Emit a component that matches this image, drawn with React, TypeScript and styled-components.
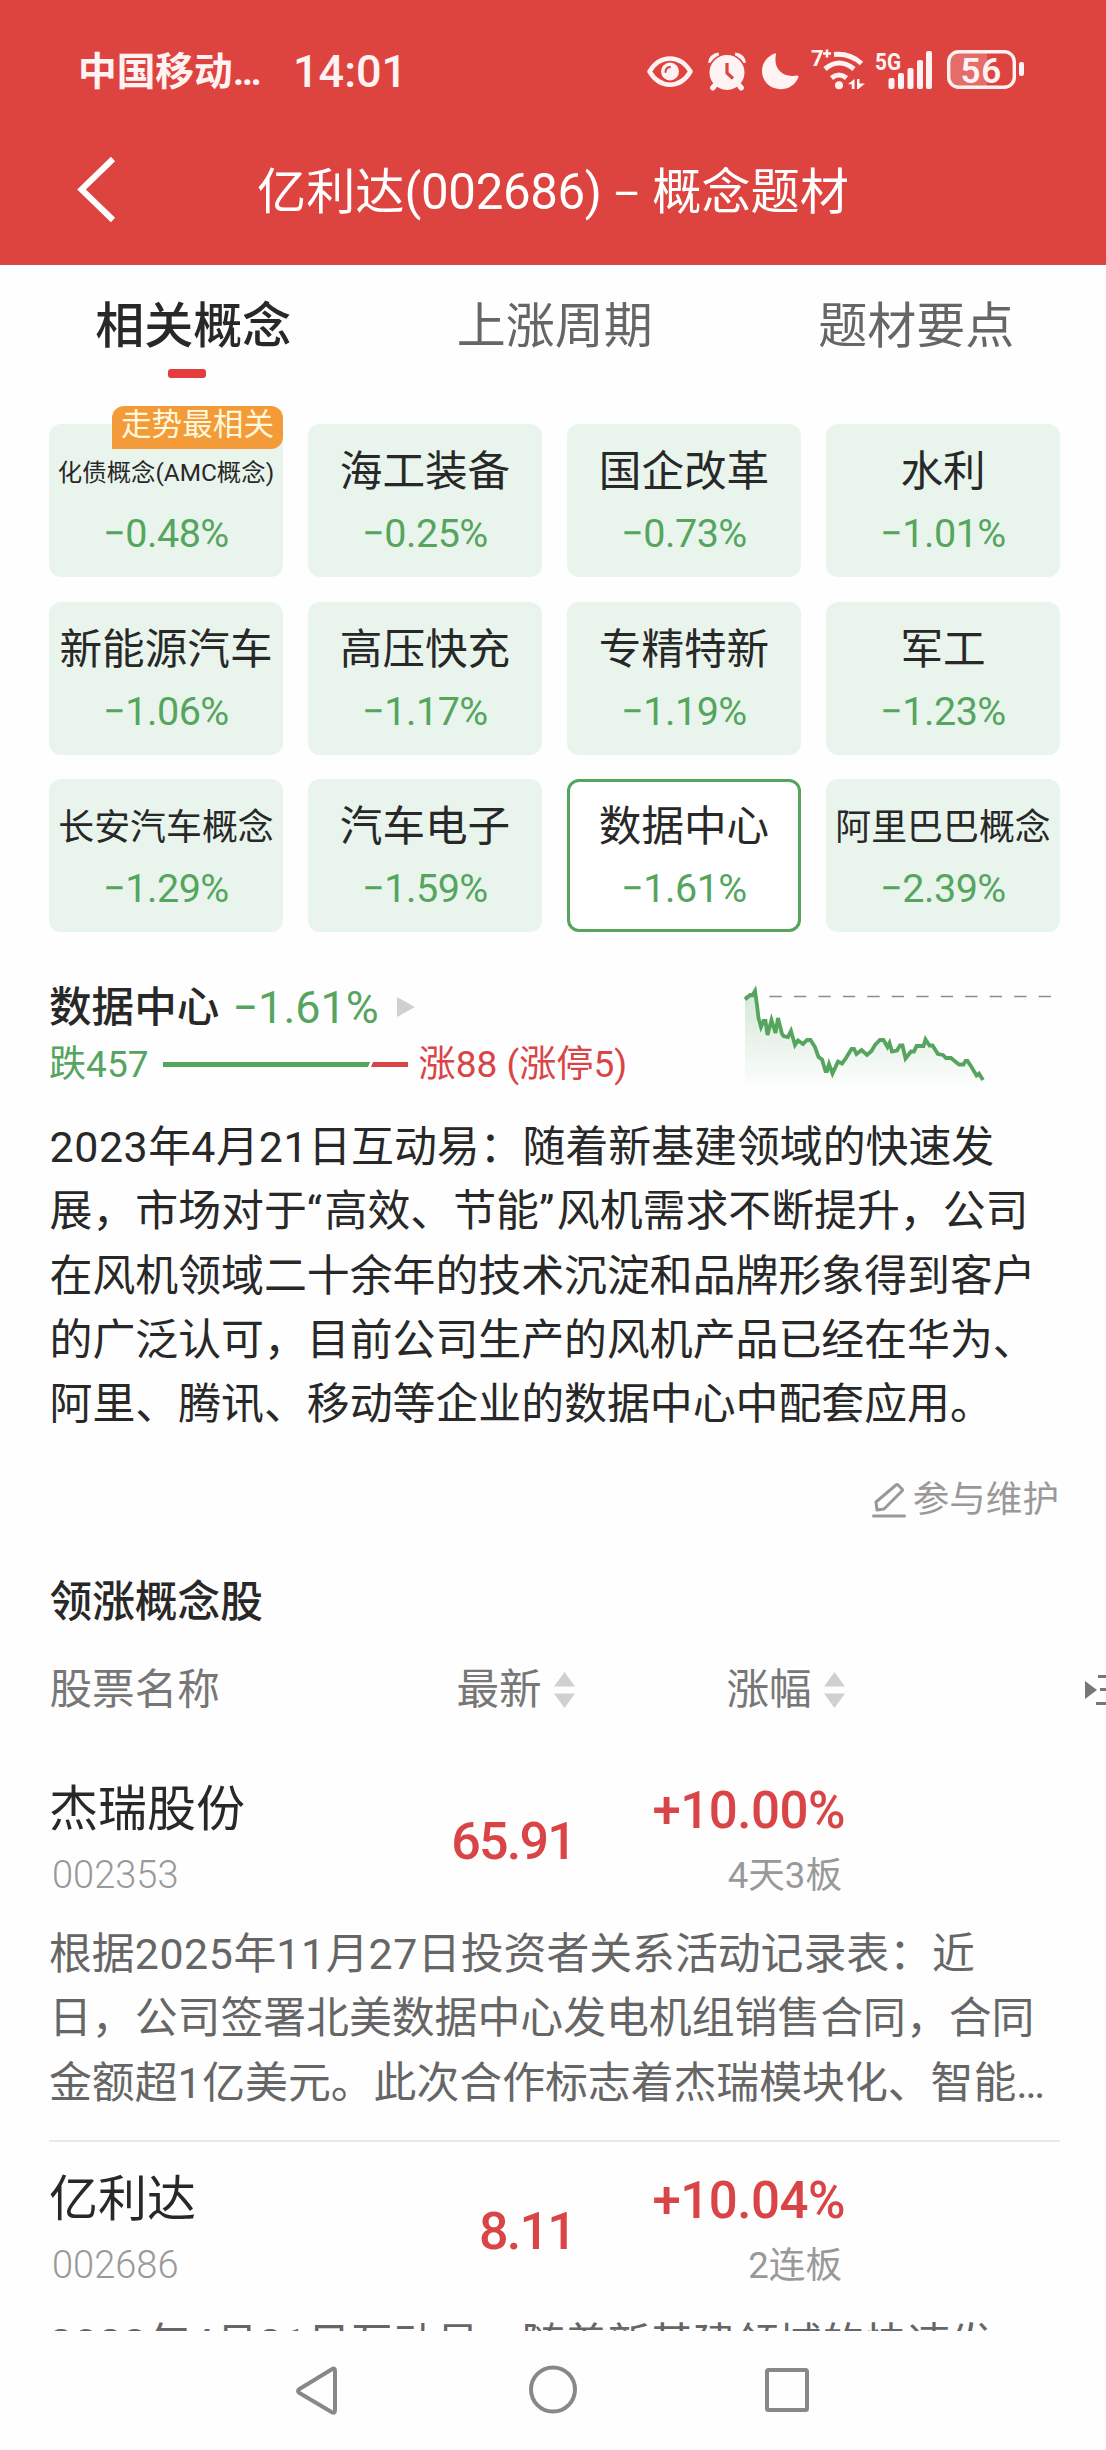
import React from "react";
import styled, { createGlobalStyle } from "styled-components";

const FONT = `Roboto, "Noto Sans CJK SC", sans-serif`;
const GREEN = "#55a55f";
const RED = "#d94546";
const INK = "#282828";

const GlobalStyle = createGlobalStyle`
  *, *::before, *::after { box-sizing: border-box; }
  html, body { margin: 0; padding: 0; background: #fff; }
  svg { display: block; }
`;

const Screen = styled.div`
  display: flex;
  flex-direction: column;
  width: 1106px;
  height: 2450px;
  overflow: hidden;
  background: #fefefe;
  color: ${INK};
  font-family: ${FONT};
  white-space: nowrap;
`;

const Header = styled.header`
  flex: none;
  height: 265px;
  background: #dd4440;
  color: #fff;
  border-bottom: 1px solid #cf4c48;
`;

const StatusBar = styled.div`
  display: flex;
  align-items: center;
  height: 142px;
  padding: 0 80px 0 78px;
  color: #fff2f2;
`;

const Carrier = styled.span`
  width: 215px;
  padding-top: 2px;
  font-size: 38.7px;
  font-weight: 700;
  line-height: 60px;
`;

const Clock = styled.span`
  flex: 1;
  padding-top: 1px;
  font-size: 45px;
  font-weight: 500;
  line-height: 60px;
`;

const TitleBar = styled.div`
  display: flex;
  align-items: center;
  height: 98px;
  padding-left: 76px;
`;

const BackButton = styled.button`
  flex: none;
  width: 181px;
  padding: 0;
  border: 0;
  background: none;
  color: inherit;
`;

const PageTitle = styled.h1`
  margin: 0;
  padding-top: 4px;
  font-size: 49.2px;
  font-weight: 400;
  line-height: 70px;
  word-spacing: -1px;
`;

const TitleCode = styled.span`
  letter-spacing: -0.35px;
`;

const TitleDash = styled.span`
  font-size: 43px;
`;

const Tabs = styled.nav`
  flex: none;
  display: grid;
  grid-template-columns: repeat(3, 361.5px);
  padding: 27px 0 0 12.5px;
  height: 159px;
`;

const Tab = styled.div<{ $active?: boolean }>`
  display: flex;
  flex-direction: column;
  align-items: center;
  font-size: 49px;
  line-height: 70px;
  font-weight: ${(p) => (p.$active ? 500 : 400)};
  color: ${(p) => (p.$active ? INK : "#666")};
`;

const Indicator = styled.i`
  width: 38px;
  height: 9px;
  margin: 7px 12px 0 0;
  border-radius: 3px;
  background: #e33d40;
`;

const ConceptGrid = styled.section`
  flex: none;
  display: grid;
  grid-template-columns: repeat(4, 234px);
  grid-auto-rows: 153px;
  gap: 24.6px 25px;
  padding: 0 49px;
`;

const Concept = styled.div<{ $selected?: boolean }>`
  position: relative;
  display: flex;
  flex-direction: column;
  align-items: center;
  border-radius: 12px;
  border: 3px solid ${(p) => (p.$selected ? GREEN : "#e9f5ec")};
  background: ${(p) => (p.$selected ? "#fff" : "#e9f5ec")};
`;

const ConceptName = styled.div<{ $size: number; $drop: number }>`
  height: 60px;
  margin-top: 14px;
  padding-top: ${(p) => p.$drop}px;
  font-size: ${(p) => p.$size}px;
  line-height: 60px;
`;

const ConceptChange = styled.div`
  margin-top: 3px;
  color: ${GREEN};
  font-size: 39.5px;
  line-height: 60px;
  letter-spacing: -0.5px;
`;

const Badge = styled.span`
  position: absolute;
  right: -3px;
  top: -21px;
  width: 171px;
  height: 43px;
  border-radius: 12px 12px 12px 0;
  background: #f29b38;
  color: #fff8dc;
  font-size: 30.6px;
  line-height: 38px;
  text-align: center;
`;

const Summary = styled.section`
  flex: none;
  display: flex;
  justify-content: space-between;
  height: 183px;
  padding: 44px 49px 0;
`;

const SummaryText = styled.div`
  padding-top: 2px;
`;

const SummaryLine = styled.div`
  display: flex;
  align-items: center;
  height: 57px;
`;

const ConceptTitle = styled.h2`
  margin: 0 13px 0 0;
  font-size: 42.6px;
  font-weight: 500;
  line-height: 56px;
`;

const SummaryChange = styled.span`
  margin-right: 18px;
  padding-top: 3px;
  color: ${GREEN};
  font-size: 45px;
  line-height: 56px;
`;

const Count = styled.span<{ $up?: boolean }>`
  padding-top: 2px;
  color: ${(p) => (p.$up ? RED : GREEN)};
  font-size: 37.1px;
  line-height: 56px;
`;

const Ratio = styled.div`
  width: 245px;
  margin: 2px 11px 0 14px;
`;

const ChartBox = styled.div`
  width: 315px;
`;

const Body = styled.div`
  flex: none;
  padding-left: 49.5px;
  font-size: 42.88px;
  line-height: 64.3px;
`;

const Digits = styled.span`
  letter-spacing: 0.6px;
`;

const Quotation = styled.span`
  letter-spacing: 2.6px;
`;

const Maintain = styled.div`
  flex: none;
  display: flex;
  align-items: center;
  justify-content: flex-end;
  gap: 7px;
  height: 60px;
  margin-top: 33px;
  padding-right: 47px;
  color: #999;
  font-size: 36.6px;
  line-height: 60px;
`;

const SectionTitle = styled.h2`
  flex: none;
  margin: 42px 0 0;
  padding-left: 49.5px;
  font-size: 42.7px;
  font-weight: 500;
  line-height: 60px;
`;

const TableHead = styled.div`
  flex: none;
  display: grid;
  grid-template-columns: 407px 270px 358px 22px;
  align-items: center;
  height: 60px;
  margin-top: 28.5px;
  padding-left: 49.5px;
  color: #777;
  font-size: 42.6px;
  line-height: 56px;
`;

const HeadCell = styled.div`
  display: flex;
  align-items: center;
  gap: 12px;
`;

const HeadLabel = styled.span`
  padding-bottom: 2px;
`;

const Stock = styled.article`
  flex: none;
  height: 390px;
  margin: 0 46px 0 49px;
  padding-top: 25px;
  border-bottom: 2px solid #e9e9e9;
`;

const Quote = styled.div`
  display: grid;
  grid-template-columns: 250px 276px 270px;
  height: 133px;
`;

const StockName = styled.div`
  font-size: 49px;
  line-height: 66px;
`;

const StockCode = styled.div`
  padding-left: 3px;
  color: #999;
  font-size: 38px;
  font-weight: 300;
  line-height: 65px;
`;

const Price = styled.div`
  color: ${RED};
  font-size: 52px;
  font-weight: 500;
  line-height: 129px;
  letter-spacing: -1.8px;
  text-align: right;
`;

const Gain = styled.div`
  color: ${RED};
  font-size: 51px;
  font-weight: 500;
  line-height: 67px;
  letter-spacing: -0.5px;
  text-align: right;
`;

const Streak = styled.div`
  padding-right: 3px;
  color: #999;
  font-size: 36.6px;
  line-height: 64px;
  text-align: right;
`;

const Reason = styled.div`
  padding-top: 12px;
  color: #666;
  font-size: 42.85px;
  line-height: 64.3px;
`;

const StockList = styled.main`
  flex: none;
  height: 579px;
  margin-top: 31.8px;
  overflow: hidden;
`;

const NavBar = styled.footer`
  flex: none;
  display: flex;
  justify-content: space-between;
  align-items: center;
  height: 119px;
  padding: 0 295px;
`;

const concepts = [
  { name: "化债概念(AMC概念)", change: "−0.48%", size: 24.4, drop: 2, badge: "走势最相关" },
  { name: "海工装备", change: "−0.25%" },
  { name: "国企改革", change: "−0.73%" },
  { name: "水利", change: "−1.01%" },
  { name: "新能源汽车", change: "−1.06%" },
  { name: "高压快充", change: "−1.17%" },
  { name: "专精特新", change: "−1.19%" },
  { name: "军工", change: "−1.23%" },
  { name: "长安汽车概念", change: "−1.29%", size: 35.9, drop: 2 },
  { name: "汽车电子", change: "−1.59%" },
  { name: "数据中心", change: "−1.61%", selected: true },
  { name: "阿里巴巴概念", change: "−2.39%", size: 35.9, drop: 2 },
];

const stocks = [
  {
    name: "杰瑞股份", code: "002353", price: "65.91", gain: "+10.00%", streak: "4天3板",
    reason: [
      "根据2025年11月27日投资者关系活动记录表：近",
      "日，公司签署北美数据中心发电机组销售合同，合同",
      "金额超1亿美元。此次合作标志着杰瑞模块化、智能…",
    ],
  },
  {
    name: "亿利达", code: "002686", price: "8.11", gain: "+10.04%", streak: "2连板",
    reason: ["2023年4月21日互动易：随着新基建领域的快速发"],
  },
];

const intro = [
  "2023年4月21日互动易：随着新基建领域的快速发",
  "展，市场对于“高效、节能”风机需求不断提升，公司",
  "在风机领域二十余年的技术沉淀和品牌形象得到客户",
  "的广泛认可，目前公司生产的风机产品已经在华为、",
  "阿里、腾讯、移动等企业的数据中心中配套应用。",
];

const TextLine = ({ text }: { text: string }) => (
  <div>
    {text.split(/([0-9]+|[“”])/).map((part, i) => {
      if (/^[0-9]/.test(part)) return <Digits key={i}>{part}</Digits>;
      if (/^[“”]/.test(part)) return <Quotation key={i}>{part}</Quotation>;
      return part;
    })}
  </div>
);

const StatusIcons = () => (
  <svg width="386" height="56" viewBox="640 43 386 56" fill="none" stroke="#fff2f2">
    <path d="M649.500 71.500C660 54 680 54 690.500 71.500C680 89 660 89 649.500 71.500Z" strokeWidth="4.500" strokeLinejoin="round" />
    <circle cx="670" cy="71.500" r="9" fill="#fff2f2" stroke="none" />
    <path d="M665.500 72Q665.500 67.500 670 67" stroke="#dd4440" strokeWidth="2" strokeLinecap="round" />
    <path d="M710.500 63Q711.500 56 719 55M735 55Q742.500 56 743.500 63" strokeWidth="5" />
    <path d="M717 83L712.500 88M737 83L741.500 88" strokeWidth="5" strokeLinecap="round" />
    <circle cx="727" cy="72.500" r="18.300" fill="#fff2f2" stroke="#dd4440" strokeWidth="1.600" />
    <path d="M716 84L713 87.500M738 84L741 87.500" strokeWidth="5" strokeLinecap="round" />
    <path d="M727 63V73L733 78.500" stroke="#dd4440" strokeWidth="3.200" />
    <path d="M774.500 53.500Q776 52.500 776 54.500C773 69 783 78 797 75.500Q799 75.500 798.500 77C795 86 787 89.500 780 89.200C769 88.500 762 80.500 762 71C762 63 767 56.500 774.500 53.500Z" fill="#fff2f2" stroke="none" />
    <g strokeWidth="5">
      <path d="M834 54.500Q850 53 861.500 63.500M825 69Q839 57 854 69M831.500 78Q839 72 846.500 78" />
      <circle cx="839" cy="85.300" r="4" fill="#fff2f2" stroke="none" />
      <path d="M848 84L854.500 79V89H851.800V84.500ZM857 79H859.500V83.500H865L858.500 89H857Z" fill="#fff2f2" stroke="none" />
    </g>
    <path d="M823 53.500H831M827 49.500V57.500" strokeWidth="2.600" />
    <g fill="#fff2f2" stroke="none" fontFamily={FONT} fontWeight="700">
      <text x="811" y="66" fontSize="22">7</text>
      <text x="875" y="69.500" fontSize="24.500" textLength="26" lengthAdjust="spacingAndGlyphs">5G</text>
      <rect x="888.500" y="78" width="6" height="11" rx="2" />
      <rect x="898" y="73" width="6" height="16" rx="2" />
      <rect x="907.500" y="68" width="6" height="21" rx="2" />
      <rect x="917" y="60" width="6" height="29" rx="2" />
      <rect x="926" y="51" width="6" height="38" rx="2" />
    </g>
    <path d="M956 53H987V87H956Q950 87 950 79V61Q950 53 956 53Z" fill="#fff" fillOpacity=".22" stroke="none" />
    <rect x="948.700" y="51.700" width="65.600" height="35.600" rx="10" strokeWidth="3.400" />
    <rect x="1019" y="62" width="5" height="14" rx="2" fill="#fff2f2" stroke="none" />
    <text x="960.500" y="82.500" fontSize="35" letterSpacing="0.800" fontFamily={FONT} fontWeight="600" fill="#fff2f2" stroke="none">56</text>
  </svg>
);

const SortIcon = () => (
  <svg width="21" height="36" viewBox="0 0 21 36" fill="#d0d0d0">
    <path d="M10.500 0L21 14.500H0ZM0 21.500H21L10.500 36Z" />
  </svg>
);

const TREND =
  "M745 999.500L750 995L753 994.500L755 991L757 1005L758.500 1018L761 1027L763.500 1021H765.500L767.500 1035L771.500 1020L775.500 1033L778 1018L782 1034L783.500 1036L788 1037L791 1031L795 1045L798 1040.500L803 1044L807 1040H810.500L815 1047L818.500 1057L822 1059.500L825.500 1071H827L829 1064L832.500 1073.500L838 1061.500L842 1063.500L846 1058L851.500 1049H854L856.500 1054L861.500 1050L867 1055L871.500 1051L875 1045L880 1040H883.500L887.500 1047L889.500 1043L892 1051.500L897 1050.500L900 1045.500H902.500L905.500 1058.500L911 1051.500H914L916.500 1046H923.500L925.500 1039.500L929.500 1045.500H932.500L938 1054L943 1055L946 1058H951L954 1060.500L959 1064.500L963.500 1064.500L965.500 1061H967.500L971.500 1067L976.500 1075.500L979 1073.500L983 1080";

const TrendChart = () => (
  <svg width="315" height="118" viewBox="742 976 315 118" fill="none">
    <defs>
      <linearGradient id="fade" x1="0" y1="990" x2="0" y2="1090" gradientUnits="userSpaceOnUse">
        <stop stopColor={GREEN} stopOpacity=".25" />
        <stop offset="1" stopColor={GREEN} stopOpacity="0" />
      </linearGradient>
    </defs>
    <path d="M745 996.500H1052" stroke="#8c8c8c" strokeWidth="1.400" strokeDasharray="12.300 12.170" />
    <path d={`${TREND}V1090H745Z`} fill="url(#fade)" />
    <path d={TREND} stroke={GREEN} strokeWidth="3.800" strokeLinejoin="miter" />
  </svg>
);

export default function App() {
  return (
    <>
      <GlobalStyle />
      <Screen>
        <Header>
          <StatusBar>
            <Carrier>中国移动…</Carrier>
            <Clock>14:01</Clock>
            <StatusIcons />
          </StatusBar>
          <TitleBar>
            <BackButton aria-label="返回">
              <svg width="44" height="76" viewBox="0 0 44 76" fill="none" stroke="#fff" strokeWidth="6">
                <path d="M37 6L5.500 36.500L37 67" />
              </svg>
            </BackButton>
            <PageTitle>
              亿利达<TitleCode>(002686)</TitleCode> <TitleDash>–</TitleDash> 概念题材
            </PageTitle>
          </TitleBar>
        </Header>
        <Tabs>
          <Tab $active>相关概念<Indicator /></Tab>
          <Tab>上涨周期</Tab>
          <Tab>题材要点</Tab>
        </Tabs>
        <ConceptGrid>
          {concepts.map((c) => (
            <Concept key={c.name} $selected={c.selected}>
              {c.badge && <Badge>{c.badge}</Badge>}
              <ConceptName $size={c.size ?? 42.6} $drop={c.drop ?? 0}>{c.name}</ConceptName>
              <ConceptChange>{c.change}</ConceptChange>
            </Concept>
          ))}
        </ConceptGrid>
        <Summary>
          <SummaryText>
            <SummaryLine>
              <ConceptTitle>数据中心</ConceptTitle>
              <SummaryChange>−1.61%</SummaryChange>
              <svg width="18" height="20" viewBox="0 0 18 20" fill="#d0d0d0"><path d="M0 0L18 10L0 20Z" /></svg>
            </SummaryLine>
            <SummaryLine>
              <Count>跌457</Count>
              <Ratio>
                <svg width="245" height="5" viewBox="0 0 245 5">
                  <path d="M0 0H207L205 5H0Z" fill={GREEN} />
                  <path d="M210 0H245V5H208Z" fill={RED} />
                </svg>
              </Ratio>
              <Count $up>涨88 (涨停5)</Count>
            </SummaryLine>
          </SummaryText>
          <ChartBox><TrendChart /></ChartBox>
        </Summary>
        <Body>{intro.map((t) => <TextLine key={t} text={t} />)}</Body>
        <Maintain>
          <svg width="34" height="36" viewBox="0 0 34 36" fill="none" stroke="#999" strokeWidth="3">
            <path d="M5 28L4 20L24 3Q25 2 26 3L30 7Q31 8 30 9L12 27Z" strokeLinejoin="round" />
            <path d="M1.500 34H32.500" strokeLinecap="round" />
          </svg>
          参与维护
        </Maintain>
        <SectionTitle>领涨概念股</SectionTitle>
        <TableHead>
          <HeadCell><HeadLabel>股票名称</HeadLabel></HeadCell>
          <HeadCell><HeadLabel>最新</HeadLabel><SortIcon /></HeadCell>
          <HeadCell><HeadLabel>涨幅</HeadLabel><SortIcon /></HeadCell>
          <svg width="22" height="32" viewBox="0 0 22 32" fill="#777">
            <path d="M0 7L12 16L0 25ZM13 1H22V4H13ZM15 14H22V17H15ZM11 28H22V31H11Z" />
          </svg>
        </TableHead>
        <StockList>
          {stocks.map((s) => (
            <Stock key={s.code}>
              <Quote>
                <div>
                  <StockName>{s.name}</StockName>
                  <StockCode>{s.code}</StockCode>
                </div>
                <Price>{s.price}</Price>
                <div>
                  <Gain>{s.gain}</Gain>
                  <Streak>{s.streak}</Streak>
                </div>
              </Quote>
              <Reason>{s.reason.map((t) => <TextLine key={t} text={t} />)}</Reason>
            </Stock>
          ))}
        </StockList>
        <NavBar>
          <svg width="47" height="50" viewBox="0 0 47 50" fill="none" stroke="#888" strokeWidth="4">
            <path d="M36.500 4.500Q40 2 40 6V45Q40 49 36.500 47L4.500 28Q1.500 26 4.500 24Z" strokeLinejoin="round" />
          </svg>
          <svg width="50" height="50" viewBox="0 0 50 50" fill="none" stroke="#888" strokeWidth="4">
            <circle cx="25" cy="24.500" r="22" />
          </svg>
          <svg width="48" height="48" viewBox="0 0 48 48" fill="none" stroke="#888" strokeWidth="4">
            <rect x="4" y="4" width="40" height="40" rx="1.500" />
          </svg>
        </NavBar>
      </Screen>
    </>
  );
}
